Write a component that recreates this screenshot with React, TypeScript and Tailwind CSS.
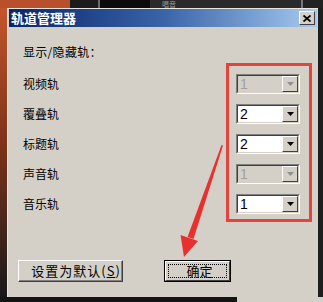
import React from "react";

const FONT = { fontFamily: '"Noto Sans CJK SC", "Liberation Sans", sans-serif' };

const tracks = [
  { label: "视频轨", value: "1", disabled: true },
  { label: "覆叠轨", value: "2", disabled: false },
  { label: "标题轨", value: "2", disabled: false },
  { label: "声音轨", value: "1", disabled: true },
  { label: "音乐轨", value: "1", disabled: false },
];

const Combo = ({ value, disabled }: { value: string; disabled: boolean }) => (
  <div className="w-[64px] h-[20px] border border-t-[#808080] border-l-[#808080] border-r-white border-b-white">
    <div
      className={`w-full h-full flex border border-t-[#404040] border-l-[#404040] border-r-[#d4d0c8] border-b-[#d4d0c8] ${
        disabled ? "bg-[#d4d0c8]" : "bg-white"
      }`}
    >
      <span
        className={`flex-1 pl-[2px] text-[14px] leading-[16px] ${disabled ? "text-[#a0a0a0]" : "text-black"}`}
        style={{ fontFamily: '"Liberation Sans", sans-serif' }}
      >
        {value}
      </span>
      <div className="w-[16px] h-full bg-[#d4d0c8] border border-t-white border-l-white border-r-[#404040] border-b-[#404040] flex items-center justify-center">
        <svg width="7" height="4" viewBox="0 0 7 4">
          <polygon points="0,0 7,0 3.5,4" fill={disabled ? "#909090" : "#000"} />
        </svg>
      </div>
    </div>
  </div>
);

export default function App() {
  return (
    <div className="relative w-[323px] h-[302px] overflow-hidden bg-[#141414] flex flex-col" style={FONT}>
      {/* background strip above the dialog */}
      <div className="h-[8px] flex shrink-0">
        <div className="w-[70px] bg-[#b8502c]" />
        <div className="w-[28px] bg-[#1c1c1c]" />
        <div className="w-[2px] bg-[#6a6a6a]" />
        <div className="w-[50px] bg-[#0c0c0c]" />
        <div className="flex-1 bg-[#2a2a2a] text-[7px] leading-[8px] text-[#9a9a9a] pl-[12px] overflow-hidden">唱音</div>
        <div className="w-[2px] bg-[#777]" />
        <div className="w-[20px] bg-[#222]" />
      </div>

      <div className="flex flex-1">
        <div className="w-[7px] bg-gradient-to-b from-[#c4552c] via-[#7a3018] to-[#181818]" />

        {/* dialog */}
        <div className="w-[311px] bg-[#d4d0c8] border-t border-l border-t-[#e8e6e0] border-l-[#e8e6e0] flex flex-col">
          {/* title bar */}
          <div className="mx-[1px] h-[18px] bg-gradient-to-r from-[#0a246a] via-[#3a64a8] to-[#a6caf0] flex items-center pl-[2px] pr-[2px]">
            <span className="flex-1 text-white font-bold text-[13px] leading-[18px]">轨道管理器</span>
            <div className="w-[16px] h-[14px] bg-[#d4d0c8] border border-t-white border-l-white border-r-[#404040] border-b-[#404040] flex items-center justify-center">
              <svg width="8" height="7" viewBox="0 0 8 7">
                <path d="M0.5 0.5 L7.5 6.5 M7.5 0.5 L0.5 6.5" stroke="#000" strokeWidth="1.8" />
              </svg>
            </div>
          </div>

          <div className="pl-[15px] pt-[17px] text-[12px] leading-[16px] tracking-[0.3px] text-black">显示/隐藏轨：</div>

          <div className="flex mt-[3px]">
            <div className="flex-1 pl-[15px] pt-[6px] flex flex-col">
              {tracks.map((t) => (
                <div key={t.label} className="h-[30px] flex items-center text-[12px] text-black">
                  {t.label}
                </div>
              ))}
            </div>
            <div className="w-[86px] mr-[6px] border-[3px] border-[#e2443e] pt-[3px] pl-[7px] flex flex-col">
              {tracks.map((t) => (
                <div key={t.label} className="h-[30px] flex items-center">
                  <Combo value={t.value} disabled={t.disabled} />
                </div>
              ))}
            </div>
          </div>

          {/* buttons */}
          <div className="flex mt-[38px] pl-[10px] gap-[41px]">
            <div className="w-[105px] h-[22px] bg-[#d4d0c8] border border-t-white border-l-white border-r-[#404040] border-b-[#404040]">
              <div className="w-full h-full border-r border-b border-r-[#808080] border-b-[#808080] flex items-center justify-center pl-[12px] text-[13px] tracking-[1px] text-black">
                设置为默认(<span className="underline">S</span>)
              </div>
            </div>
            <div className="w-[67px] h-[22px] border border-black">
              <div className="w-full h-full bg-[#d4d0c8] border border-t-white border-l-white border-r-[#404040] border-b-[#404040] p-[2px]">
                <div className="w-full h-full border border-dotted border-black flex items-center justify-center pl-[4px] text-[13px] text-black">
                  确定
                </div>
              </div>
            </div>
          </div>

          <div className="flex-1" />
        </div>

        <div className="flex-1 bg-[#1e1e1e]" />
      </div>

      {/* strip below the dialog */}
      <div className="h-[5px] flex shrink-0">
        <div className="w-[237px] bg-[#141414]" />
        <div className="flex-1 bg-[#d4d0c8]" />
      </div>

      {/* red arrow annotation */}
      <svg className="absolute left-0 top-0 pointer-events-none" width="323" height="302" viewBox="0 0 323 302">
        <polygon points="221.5,145 223,145.6 193.5,239 187.5,237" fill="#e8312f" />
        <polygon points="184,257 180.5,235 198,241" fill="#e8312f" />
      </svg>
    </div>
  );
}
